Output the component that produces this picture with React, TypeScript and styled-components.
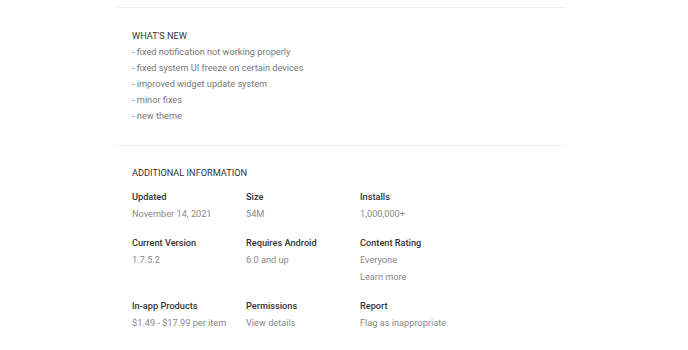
import styled, { createGlobalStyle } from "styled-components";

const GlobalStyle = createGlobalStyle`
  body {
    margin: 0;
    background: #fff;
    font-family: Roboto, "Liberation Sans", Arial, sans-serif;
  }
`;

type InfoItem = {
  label: string;
  values: string[];
};

const Page = styled.div`
  width: 450px;
  margin-left: 116px;
  padding-top: 7px;
`;

const Section = styled.section<{ $top: number; $bottom: number }>`
  border-top: 1px solid #efefef;
  padding: ${(p) => p.$top}px 16px ${(p) => p.$bottom}px;
`;

const Heading = styled.h2`
  margin: 0;
  font-size: 9.2px;
  font-weight: 400;
  line-height: 16px;
  color: #333;
  text-transform: uppercase;
`;

const Notes = styled.ul`
  list-style: none;
  margin: 0;
  padding: 0;
`;

const Note = styled.li`
  font-size: 9.2px;
  line-height: 16px;
  color: #777;
`;

const InfoGrid = styled.div`
  display: grid;
  grid-template-columns: repeat(3, 114px);
  row-gap: 12px;
  margin-top: 7px;
`;

const Cell = styled.div`
  display: flex;
  flex-direction: column;
`;

const Label = styled.span`
  font-size: 9.2px;
  font-weight: 500;
  line-height: 17px;
  color: #333;
`;

const Value = styled.span`
  font-size: 9.2px;
  line-height: 17px;
  color: #888;
`;

const notes = [
  "- fixed notification not working properly",
  "- fixed system UI freeze on certain devices",
  "- improved widget update system",
  "- minor fixes",
  "- new theme",
];

const info: InfoItem[] = [
  { label: "Updated", values: ["November 14, 2021"] },
  { label: "Size", values: ["54M"] },
  { label: "Installs", values: ["1,000,000+"] },
  { label: "Current Version", values: ["1.7.5.2"] },
  { label: "Requires Android", values: ["6.0 and up"] },
  { label: "Content Rating", values: ["Everyone", "Learn more"] },
  { label: "In-app Products", values: ["$1.49 - $17.99 per item"] },
  { label: "Permissions", values: ["View details"] },
  { label: "Report", values: ["Flag as inappropriate"] },
];

const App = () => {
  return (
    <>
      <GlobalStyle />
      <Page>
        <Section $top={20} $bottom={21}>
          <Heading>What's New</Heading>
          <Notes>
            {notes.map((n) => (
              <Note key={n}>{n}</Note>
            ))}
          </Notes>
        </Section>
        <Section $top={19} $bottom={20}>
          <Heading>Additional Information</Heading>
          <InfoGrid>
            {info.map((item) => (
              <Cell key={item.label}>
                <Label>{item.label}</Label>
                {item.values.map((v) => (
                  <Value key={v}>{v}</Value>
                ))}
              </Cell>
            ))}
          </InfoGrid>
        </Section>
      </Page>
    </>
  );
};

export default App;
